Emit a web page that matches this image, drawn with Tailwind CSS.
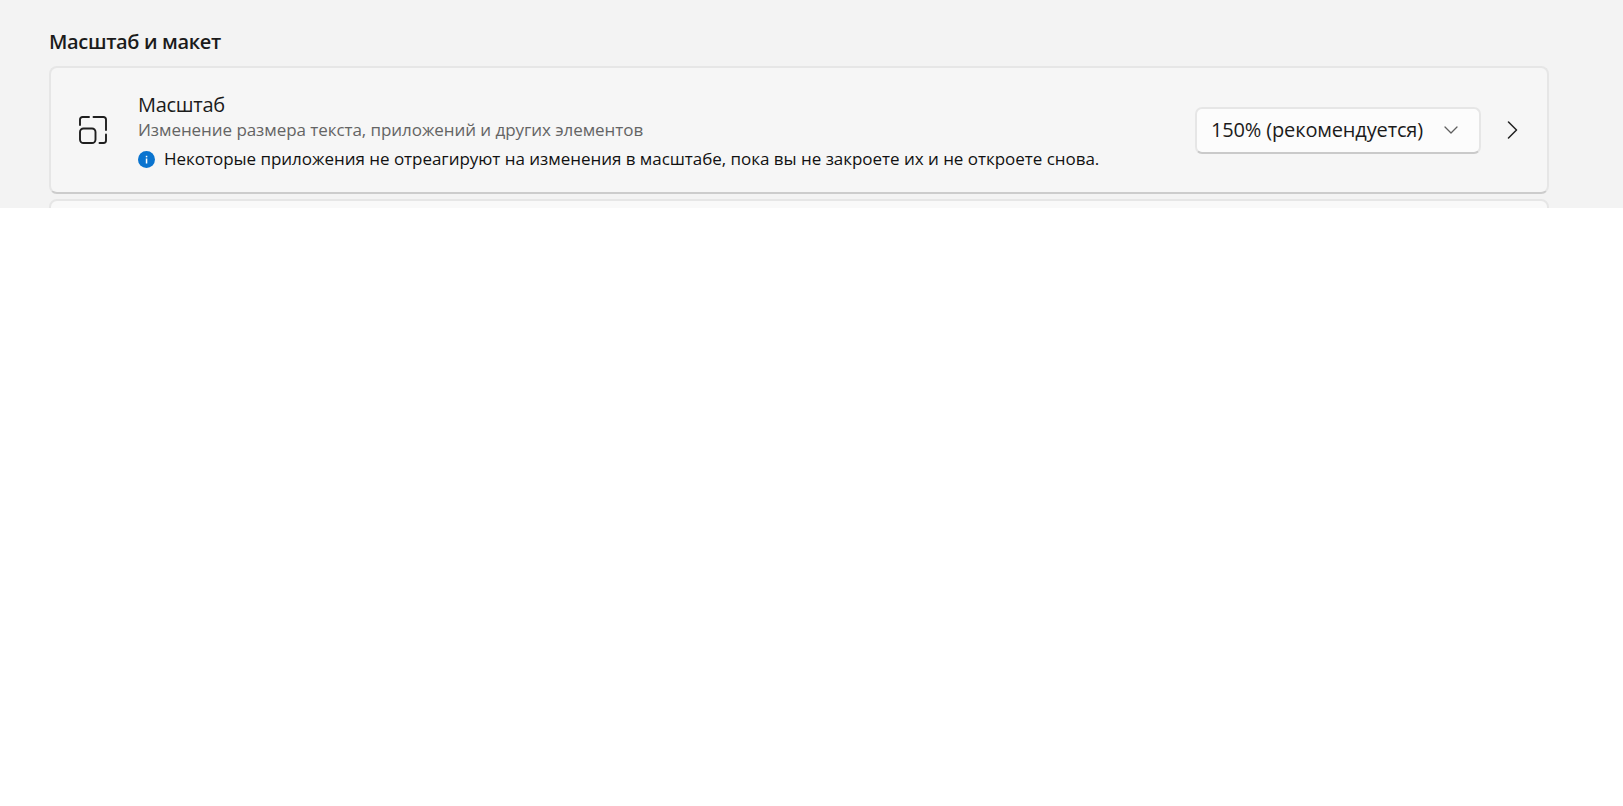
<!DOCTYPE html>
<html lang="ru">

<head>
    <meta charset="UTF-8">
    <meta name="viewport" content="width=device-width, initial-scale=1.0">
    <title>Масштаб и макет</title>
    <script src="https://cdn.jsdelivr.net/npm/@tailwindcss/browser@4"></script>
</head>

<body class="bg-white h-[806px] overflow-hidden font-['Open_Sans','Noto_Sans',sans-serif] text-[#1b1b1b]">
    <div class="h-[208px] overflow-hidden bg-[#f3f3f3] pl-[49px] pr-[74px]">
        <h2 class="pt-[28px] h-[66px] text-[20px] leading-[28px] font-semibold tracking-[-0.35px]">Масштаб и макет</h2>

        <div class="h-[128px] flex items-center rounded-[8px] border-2 border-[#e6e6e6] border-b-[#cccccc] bg-[#f6f6f6] pl-[28px] pr-[29px]">
            <svg class="w-[28px] h-[28px] shrink-0" viewBox="0 0 28 28" fill="none" stroke="#1f1f1f" stroke-width="1.900" stroke-linecap="round">
                <path d="M1 9V3.500A2.500 2.500 0 0 1 3.500 1H10" />
                <path d="M14.500 1h10A2.500 2.500 0 0 1 27 3.500V14" />
                <path d="M27 18.500v6a2.500 2.500 0 0 1-2.500 2.500H20.500" />
                <rect x="1" y="12.500" width="15.500" height="14.500" rx="3.500" />
            </svg>

            <div class="ml-[31px] flex-1 pt-[3px]">
                <div class="text-[20px] leading-[26px] tracking-[-0.3px]">Масштаб</div>
                <div class="text-[17px] leading-[24px] tracking-[-0.06px] text-[#646464]">Изменение размера текста, приложений и других элементов</div>
                <div class="mt-[5px] flex items-center gap-[9px] text-[17px] leading-[24px] tracking-[-0.03px] text-[#111]">
                    <svg class="w-[17px] h-[17px]" viewBox="0 0 17 17">
                        <circle cx="8.500" cy="8.500" r="8.500" fill="#0a74cf" />
                        <rect x="7.800" y="7.500" width="1.500" height="5" fill="#fff" />
                        <rect x="7.800" y="4.800" width="1.500" height="1.500" fill="#fff" />
                    </svg>
                    <span>Некоторые приложения не отреагируют на изменения в масштабе, пока вы не закроете их и не откроете снова.</span>
                </div>
            </div>

            <button class="w-[286px] h-[47px] shrink-0 flex items-center justify-between rounded-[7px] border-2 border-[#e6e6e6] border-b-[#cacaca] bg-[#fcfcfc] pl-[14px] pr-[21px] text-[20px] tracking-[-0.15px]">
                <span>150% (рекомендуется)</span>
                <svg class="w-[14px] h-[8px]" viewBox="0 0 14 8" fill="none" stroke="#5f5f5f" stroke-width="1.300" stroke-linecap="round" stroke-linejoin="round">
                    <path d="M1 1l6 6 6-6" />
                </svg>
            </button>

            <svg class="ml-[26px] w-[11px] h-[18px] shrink-0" viewBox="0 0 11 18" fill="none" stroke="#1f1f1f" stroke-width="1.500" stroke-linecap="round" stroke-linejoin="round">
                <path d="M1.500 1l8 8-8 8" />
            </svg>
        </div>

        <div class="mt-[5px] h-[40px] rounded-[8px] border-2 border-[#e6e6e6] bg-[#f9f9f9]"></div>
    </div>
</body>

</html>
